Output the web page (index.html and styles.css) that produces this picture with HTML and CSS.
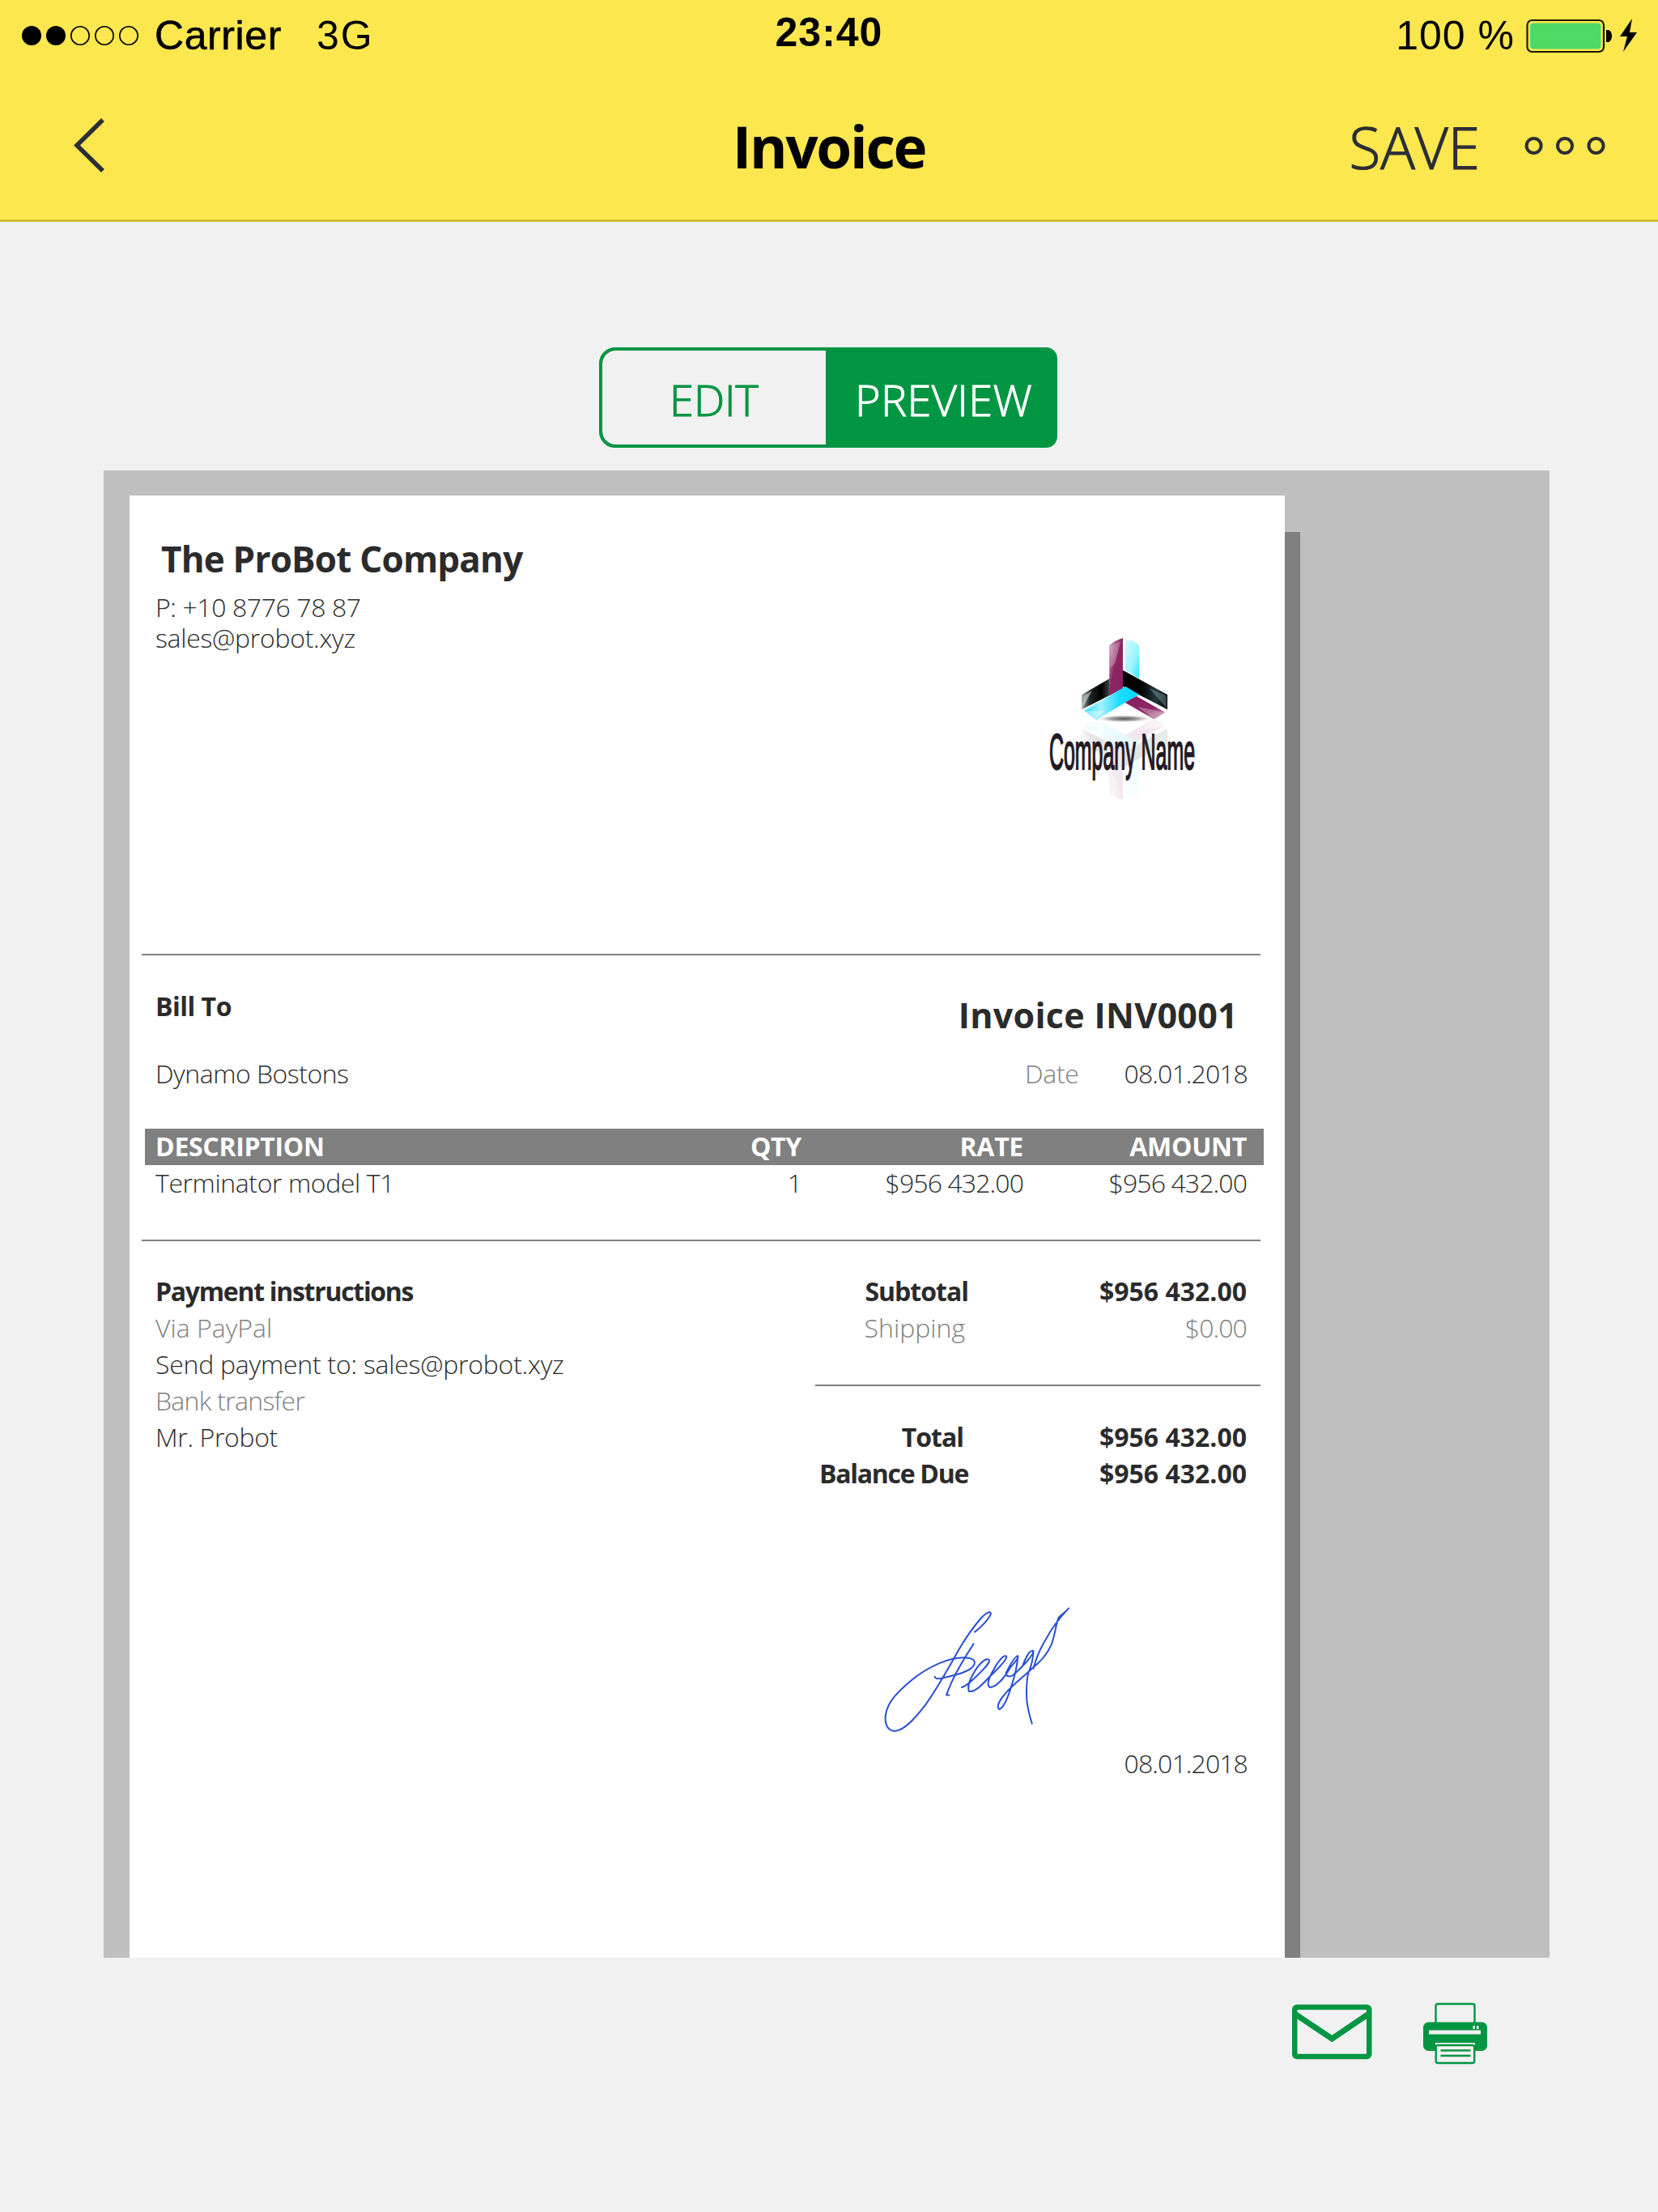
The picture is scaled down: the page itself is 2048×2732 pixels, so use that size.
FILE: index.html
```html
<!DOCTYPE html>
<html lang="en">
<head>
    <meta charset="UTF-8">
    <meta name="viewport" content="width=device-width, initial-scale=1.0">
    <title>Invoice</title>
    <link rel="stylesheet" href="styles.css">
</head>
<body>

    <!-- top bar -->
    <header class="header">
        <div class="status">
            <div class="status-left">
                <svg class="signal" width="146" height="30" viewBox="0 0 146 30">
                    <circle cx="13" cy="15" r="12"/>
                    <circle cx="43" cy="15" r="12"/>
                    <g fill="none" stroke="#000" stroke-width="1.6">
                        <circle cx="73" cy="15" r="11.2"/>
                        <circle cx="103" cy="15" r="11.2"/>
                        <circle cx="133" cy="15" r="11.2"/>
                    </g>
                </svg>
                <span class="carrier">Carrier</span>
                <span class="network">3G</span>
            </div>
            <div class="clock">23:40</div>
            <div class="status-right">
                <span class="percent">100 %</span>
                <svg width="140" height="46" viewBox="0 0 140 46">
                    <rect x="1.5" y="4" width="94.5" height="39" rx="6" fill="none" stroke="#1a1a00" stroke-width="2.2"/>
                    <rect x="5" y="7.5" width="87.5" height="32" rx="4" fill="#4cdb64"/>
                    <path d="M99 16h3q4 2 4 7.5t-4 7.5h-3z"/>
                    <path d="M131 2l-15 22h9l-5 19 17-24h-9z"/>
                </svg>
            </div>
        </div>
        <div class="nav">
            <svg class="back" width="44" height="70" viewBox="0 0 44 70">
                <path d="M39 3L7 34.500l32 31.500" fill="none" stroke="#2c2e35" stroke-width="5.5"/>
            </svg>
            <h1>Invoice</h1>
            <div class="nav-right">
                <span class="save">SAVE</span>
                <svg width="102" height="26" viewBox="0 0 102 26" fill="none" stroke="#2c2e35" stroke-width="4">
                    <circle cx="12.6" cy="13" r="9"/>
                    <circle cx="51" cy="13" r="9"/>
                    <circle cx="89.5" cy="13" r="9"/>
                </svg>
            </div>
        </div>
    </header>

    <!-- edit / preview switch -->
    <div class="switch">
        <div class="tab">EDIT</div>
        <div class="tab active">PREVIEW</div>
    </div>

    <!-- invoice sheet -->
    <main class="preview">
        <div class="sheet">
            <section class="company">
                <div class="company-text">
                    <h2>The ProBot Company</h2>
                    <p class="phone">P: +10 8776 78 87</p>
                    <p class="mail">sales@probot.xyz</p>
                </div>
                <svg class="logo" width="188" height="208" viewBox="98 98 564 624">
                    <defs>
                        <linearGradient id="purple" x1="0" y1="0" x2="1" y2="1">
                            <stop offset="0" stop-color="#d9aac6"/>
                            <stop offset=".45" stop-color="#8c2763"/>
                            <stop offset="1" stop-color="#862060"/>
                        </linearGradient>
                        <linearGradient id="purpleEnd" x1="0" y1="0" x2="1" y2="1">
                            <stop offset="0" stop-color="#862060"/>
                            <stop offset=".6" stop-color="#8c2763"/>
                            <stop offset="1" stop-color="#cf9dbc"/>
                        </linearGradient>
                        <linearGradient id="sky" x1="0" y1="0" x2="1" y2="1">
                            <stop offset="0" stop-color="#d5faff"/>
                            <stop offset=".6" stop-color="#9df3ff"/>
                            <stop offset="1" stop-color="#2fe3ff"/>
                        </linearGradient>
                        <linearGradient id="cyan" x1="0" y1="0" x2="1" y2="0">
                            <stop offset="0" stop-color="#2cdfff"/>
                            <stop offset=".3" stop-color="#a3f1ff"/>
                            <stop offset=".65" stop-color="#1bdcff"/>
                            <stop offset="1" stop-color="#00d8ff"/>
                        </linearGradient>
                        <linearGradient id="blackL" x1="0" y1="0" x2="1" y2="0">
                            <stop offset="0" stop-color="#9aa5a7"/>
                            <stop offset=".3" stop-color="#1d2526"/>
                            <stop offset=".7" stop-color="#000"/>
                            <stop offset="1" stop-color="#3c4648"/>
                        </linearGradient>
                        <linearGradient id="blackR" x1="0" y1="0" x2="1" y2="0">
                            <stop offset=".4" stop-color="#000"/>
                            <stop offset=".75" stop-color="#26383b"/>
                            <stop offset="1" stop-color="#000"/>
                        </linearGradient>
                        <radialGradient id="shade">
                            <stop offset="0" stop-color="#555"/>
                            <stop offset=".5" stop-color="#aaa"/>
                            <stop offset="1" stop-color="#fff" stop-opacity="0"/>
                        </radialGradient>
                        <g id="mark">
                            <path d="M388 118q32 0 52 22v122l-52-30z" fill="url(#sky)"/>
                            <path d="M228 323l103-60v62l-103 53z" fill="url(#blackL)"/>
                            <path d="M228 376l8-50 30-18z" fill="#fff" opacity=".45"/>
                            <path d="M330 140q20-18 50-27v187l-50 27z" fill="url(#purple)"/>
                            <path d="M334 142l38-16-20 78-18 20z" fill="#fff" opacity=".25"/>
                            <path d="M380 232l165 91v55l-165-86z" fill="url(#blackR)"/>
                            <path d="M543 374l-66-76 64 28z" fill="#9cc5c8" opacity=".35"/>
                            <path d="M237 382l153-90 50 30-158 94z" fill="url(#cyan)"/>
                            <path d="M240 384l72-2-30 30z" fill="#fff" opacity=".4"/>
                            <path d="M388 352l42-24 106 60-41 26z" fill="url(#purpleEnd)"/>
                            <path d="M534 388l-100-20 60 44z" fill="#fff" opacity=".3"/>
                        </g>
                    </defs>
                    <ellipse cx="385" cy="412" rx="110" ry="15" fill="url(#shade)"/>
                    <use href="#mark" transform="translate(0 826) scale(1 -1)" opacity=".1"/>
                    <use href="#mark"/>
                    <text class="logo-name" transform="translate(107 599) scale(.402 1)">Company Name</text>
                </svg>
            </section>

            <hr class="line">

            <section class="bill">
                <div class="bill-to">
                    <p class="bold t-bill">Bill To</p>
                    <p class="t-client">Dynamo Bostons</p>
                </div>
                <div class="bill-info">
                    <h3>Invoice INV0001</h3>
                    <p class="date-row"><span class="gray t-date">Date</span><span class="num">08.01.2018</span></p>
                </div>
            </section>

            <div class="items items-head">
                <span>DESCRIPTION</span>
                <span>QTY</span>
                <span>RATE</span>
                <span>AMOUNT</span>
            </div>
            <div class="items">
                <span class="t-item">Terminator model T1</span>
                <span class="num">1</span>
                <span class="num">$956 432.00</span>
                <span class="num">$956 432.00</span>
            </div>

            <hr class="line line-items">

            <section class="payment">
                <div class="instructions">
                    <p class="bold t-pay">Payment instructions</p>
                    <p class="gray">Via PayPal</p>
                    <p class="t-send">Send payment to: sales@probot.xyz</p>
                    <p class="gray t-bank">Bank transfer</p>
                    <p class="t-mr">Mr. Probot</p>
                </div>
                <div class="totals">
                    <div class="row bold"><span class="label t-sub">Subtotal</span><span>$956 432.00</span></div>
                    <div class="row gray"><span class="label t-ship">Shipping</span><span class="num">$0.00</span></div>
                    <hr>
                    <div class="row bold"><span class="label t-total">Total</span><span>$956 432.00</span></div>
                    <div class="row bold"><span class="label t-due">Balance Due</span><span>$956 432.00</span></div>
                </div>
            </section>

            <section class="sign">
                <svg class="signature" width="236" height="160" viewBox="80 70 660.8 480" preserveAspectRatio="none" fill="none" stroke="#2a50cf" stroke-width="2" stroke-linecap="round" stroke-linejoin="round">
                    <path vector-effect="non-scaling-stroke" d="M402 168C425 150 452 118 458 100C456 88 440 98 425 115C385 165 355 215 328 270C295 330 262 395 225 447C190 495 155 535 124 535C98 532 90 505 94 475C100 425 140 385 185 345C240 298 320 255 380 264C405 268 408 285 390 302C355 330 310 330 285 340C270 343 264 338 264 333"/>
                    <path vector-effect="non-scaling-stroke" d="M398 212C375 250 355 285 335 325C318 360 310 385 304 401L313 402"/>
                    <path vector-effect="non-scaling-stroke" d="M357 373C372 368 382 358 395 345C425 315 455 285 452 272C445 260 422 280 404 310C388 338 375 365 382 388C405 392 432 358 452 335C482 305 514 272 512 258C500 250 478 285 465 312C450 340 442 366 455 373C482 370 505 335 525 300C540 280 555 266 551 257C540 256 520 300 510 320C510 336 525 334 535 328C562 302 608 252 604 238C592 232 578 265 568 292"/>
                    <path vector-effect="non-scaling-stroke" d="M551 257C550 290 538 340 526 378C516 412 504 446 488 454C474 448 488 420 505 400C530 365 570 335 600 303C630 278 655 245 667 215C680 180 682 140 692 115C705 100 720 92 727 80C700 110 670 150 648 195C625 235 612 275 605 303M605 240C604 265 598 290 592 308C580 330 580 400 583 430Q590 475 600 507"/>
                </svg>
                <p class="num">08.01.2018</p>
            </section>
        </div>
    </main>

    <!-- actions -->
    <footer class="actions">
        <svg class="mail-icon" width="99" height="70" viewBox="0 0 99 70" fill="none" stroke="#029542">
            <rect x="3.2" y="4" width="92" height="61" rx="3" stroke-width="6.5"/>
            <path d="M3 12l46.300 31L95 12" stroke-width="7"/>
        </svg>
        <svg width="81" height="77" viewBox="0 0 81 77">
            <path d="M16.500 26V4.500q0-2.500 2.500-2.500h43q2.500 0 2.500 2.500V26" fill="none" stroke="#029542" stroke-width="2.4"/>
            <rect x="1" y="24.5" width="79" height="35.5" rx="6.5" fill="#029542"/>
            <path d="M8 34.500h64v5H8zM16 50h49v3H16zM62.500 29h2.500v4h-2.500zM67 29h2.500v4H67z" fill="#f1f1f1"/>
            <rect x="16.7" y="53" width="47.5" height="22" rx="2.5" fill="#f1f1f1" stroke="#029542" stroke-width="2.4"/>
            <path d="M22.500 59.500h37M22.500 66h37" stroke="#029542" stroke-width="2.4"/>
        </svg>
    </footer>

</body>
</html>
```
FILE: styles.css
```css
* {
    box-sizing: border-box;
    margin: 0;
    padding: 0;
}

body {
    width: 2048px;
    height: 2732px;
    overflow: hidden;
    font-family: "Open Sans", "Noto Sans", sans-serif;
    font-weight: 300;
    background-color: #f1f1f1;
    color: #2b2b2b;
}

svg {
    display: block;
    flex: none;
}

/* top bar */
.header {
    height: 274px;
    background-color: #fde74f;
    border-bottom: 3px solid #d2bd31;
    color: #000;
}
.status {
    display: grid;
    grid-template-columns: 1fr auto 1fr;
    height: 88px;
    font-family: "Liberation Sans", Arial, sans-serif;
    font-size: 50px;
    font-weight: 400;
    line-height: 88px;
}
.status-left {
    display: flex;
    align-items: center;
    padding-left: 26px;
}
.signal {
    margin-right: 19px;
}
.carrier {
    margin-right: 43px;
    letter-spacing: 0.6px;
    -webkit-text-stroke: 0.6px #000;
}
.network {
    letter-spacing: 2px;
}
.clock {
    font-weight: bold;
    letter-spacing: 1px;
    line-height: 80px;
}
.status-right {
    display: flex;
    justify-content: flex-end;
    align-items: center;
    padding-right: 23px;
}
.percent {
    margin-right: 14px;
    letter-spacing: 1px;
}
.nav {
    display: grid;
    grid-template-columns: 1fr auto 1fr;
    align-items: center;
    height: 183px;
}
.back {
    margin-left: 88px;
}
.nav h1 {
    padding-top: 3px;
    font-size: 71px;
    font-weight: 700;
    letter-spacing: -2.3px;
    line-height: 80px;
}
.nav-right {
    display: flex;
    justify-content: flex-end;
    align-items: center;
    padding-right: 64px;
}
.save {
    margin-right: 54px;
    padding-top: 4px;
    font-size: 71px;
    line-height: 80px;
    color: #2c2e35;
    -webkit-text-stroke: 1.2px #2c2e35;
}

/* switch */
.switch {
    display: flex;
    width: 566px;
    height: 124px;
    margin: 155px 0 0 740px;
    border: 4px solid #029542;
    border-radius: 20px 14px 14px 20px;
    background-color: #029542;
    overflow: hidden;
}
.tab {
    width: 276px;
    background-color: #f1f1f1;
    border-radius: 16px 0 0 16px;
    font-size: 54px;
    line-height: 120px;
    text-align: center;
    color: #029542;
    -webkit-text-stroke: 1.2px #029542;
}
.tab.active {
    flex: 1;
    padding-left: 9px;
    background-color: #029542;
    color: #fff;
    letter-spacing: 0.4px;
    -webkit-text-stroke: 1px #fff;
}

/* invoice sheet */
.preview {
    width: 1786px;
    height: 1837px;
    margin: 28px 0 0 128px;
    padding: 31px 0 0 32px;
    background-color: #bfbfbf;
    overflow: hidden;
}
.sheet {
    width: 1427px;
    height: 1806px;
    background-color: #fff;
    box-shadow: 19px 45px 0 #808080;
    font-size: 32px;
    line-height: 45px;
    white-space: nowrap;
}
.bold {
    font-weight: 700;
}
.gray {
    color: #808080;
}
.num {
    letter-spacing: -0.9px;
}
.company {
    display: flex;
    justify-content: space-between;
    height: 566px;
    padding: 48px 106px 0 32px;
    line-height: 38px;
}
.company h2 {
    margin: 0 0 11px 7px;
    font-size: 44px;
    font-weight: 700;
    letter-spacing: -0.8px;
    line-height: 60px;
}
.phone {
    letter-spacing: -0.4px;
}
.mail {
    letter-spacing: -0.3px;
}
.logo {
    margin-top: 123px;
}
.logo-name {
    font-family: "Liberation Sans", Arial, sans-serif;
    font-size: 186px;
    font-weight: 400;
    fill: #231a24;
    stroke: #231a24;
    stroke-width: 6px;
}
.line {
    width: 1382px;
    height: 2px;
    margin-left: 15px;
    border: none;
    background-color: #808080;
}
.bill {
    display: flex;
    justify-content: space-between;
    height: 214px;
    padding: 40px 46px 0 32px;
}
.t-bill {
    margin-bottom: 38px;
    letter-spacing: -0.5px;
}
.t-client {
    letter-spacing: -0.5px;
}
.bill-info {
    padding-top: 4px;
    text-align: right;
}
.bill-info h3 {
    margin: 0 12px 19px 0;
    font-size: 43px;
    font-weight: 700;
    letter-spacing: 0.3px;
    line-height: 60px;
}
.date-row {
    display: flex;
    justify-content: flex-end;
    gap: 56px;
}
.t-date {
    letter-spacing: -0.3px;
}
.items {
    display: grid;
    grid-template-columns: 598px 200px 274px 276px;
    width: 1382px;
    margin-left: 19px;
    padding-left: 13px;
    text-align: right;
    line-height: 43px;
}
.items span:first-child {
    text-align: left;
}
.items-head {
    height: 45px;
    background-color: #808080;
    color: #fff;
    font-weight: 700;
    letter-spacing: -0.3px;
}
.t-item {
    letter-spacing: -0.4px;
}
.line-items {
    margin-top: 49px;
}
.payment {
    display: flex;
    justify-content: space-between;
    padding: 39px 30px 0 32px;
}
.t-pay {
    letter-spacing: -1.3px;
}
.t-send {
    letter-spacing: -0.25px;
}
.t-bank {
    letter-spacing: -0.7px;
}
.t-mr {
    letter-spacing: -0.35px;
}
.totals {
    width: 550px;
}
.totals hr {
    height: 2px;
    margin: 48px 0 40px;
    border: none;
    background-color: #808080;
}
.row {
    display: flex;
    justify-content: space-between;
    padding-right: 17px;
}
.label {
    width: 189px;
    text-align: right;
}
.t-sub {
    letter-spacing: -1px;
}
.t-ship {
    padding-right: 4px;
}
.t-total {
    padding-right: 6px;
    letter-spacing: -1px;
}
.t-due {
    letter-spacing: -1.3px;
}
.sign {
    padding: 141px 46px 0 0;
    text-align: right;
}
.signature {
    margin: 0 0 12px 929px;
}

/* actions */
.actions {
    display: flex;
    gap: 62px;
    padding: 55px 0 0 1596px;
}
.mail-icon {
    margin-top: 2px;
}
```
